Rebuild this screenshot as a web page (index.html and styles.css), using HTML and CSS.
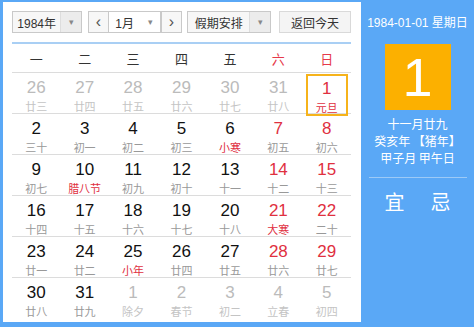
FILE: index.html
```html
<!DOCTYPE html>
<html lang="zh-CN">
<head>
    <meta charset="UTF-8">
    <title>万年历</title>
    <link rel="stylesheet" href="styles.css">
</head>
<body>
    <div class="calendar">
        <div class="main">
            <div class="toolbar">
                <div class="dropdown year">
                    <span class="value">1984年</span>
                    <span class="arrow">&#9662;</span>
                </div>
                <div class="month-group">
                    <span class="step">&lsaquo;</span>
                    <div class="dropdown month">
                        <span class="value">1月</span>
                        <span class="arrow">&#9662;</span>
                    </div>
                    <span class="step next">&rsaquo;</span>
                </div>
                <div class="dropdown holiday">
                    <span class="value">假期安排</span>
                    <span class="arrow">&#9662;</span>
                </div>
                <button class="today">返回今天</button>
            </div>

            <div class="weekdays">
                <span>一</span><span>二</span><span>三</span><span>四</span><span>五</span>
                <span class="red">六</span><span class="red">日</span>
            </div>

            <div class="days">
                <div class="row">
                    <div class="day other"><b>26</b><i>廿三</i></div>
                    <div class="day other"><b>27</b><i>廿四</i></div>
                    <div class="day other"><b>28</b><i>廿五</i></div>
                    <div class="day other"><b>29</b><i>廿六</i></div>
                    <div class="day other"><b>30</b><i>廿七</i></div>
                    <div class="day other"><b>31</b><i>廿八</i></div>
                    <div class="day weekend selected"><b>1</b><i class="fest">元旦</i></div>
                </div>
                <div class="row">
                    <div class="day"><b>2</b><i>三十</i></div>
                    <div class="day"><b>3</b><i>初一</i></div>
                    <div class="day"><b>4</b><i>初二</i></div>
                    <div class="day"><b>5</b><i>初三</i></div>
                    <div class="day"><b>6</b><i class="fest">小寒</i></div>
                    <div class="day weekend"><b>7</b><i>初五</i></div>
                    <div class="day weekend"><b>8</b><i>初六</i></div>
                </div>
                <div class="row">
                    <div class="day"><b>9</b><i>初七</i></div>
                    <div class="day"><b>10</b><i class="fest">腊八节</i></div>
                    <div class="day"><b>11</b><i>初九</i></div>
                    <div class="day"><b>12</b><i>初十</i></div>
                    <div class="day"><b>13</b><i>十一</i></div>
                    <div class="day weekend"><b>14</b><i>十二</i></div>
                    <div class="day weekend"><b>15</b><i>十三</i></div>
                </div>
                <div class="row">
                    <div class="day"><b>16</b><i>十四</i></div>
                    <div class="day"><b>17</b><i>十五</i></div>
                    <div class="day"><b>18</b><i>十六</i></div>
                    <div class="day"><b>19</b><i>十七</i></div>
                    <div class="day"><b>20</b><i>十八</i></div>
                    <div class="day weekend"><b>21</b><i class="fest">大寒</i></div>
                    <div class="day weekend"><b>22</b><i>二十</i></div>
                </div>
                <div class="row">
                    <div class="day"><b>23</b><i>廿一</i></div>
                    <div class="day"><b>24</b><i>廿二</i></div>
                    <div class="day"><b>25</b><i class="fest">小年</i></div>
                    <div class="day"><b>26</b><i>廿四</i></div>
                    <div class="day"><b>27</b><i>廿五</i></div>
                    <div class="day weekend"><b>28</b><i>廿六</i></div>
                    <div class="day weekend"><b>29</b><i>廿七</i></div>
                </div>
                <div class="row">
                    <div class="day"><b>30</b><i>廿八</i></div>
                    <div class="day"><b>31</b><i>廿九</i></div>
                    <div class="day other"><b>1</b><i>除夕</i></div>
                    <div class="day other"><b>2</b><i>春节</i></div>
                    <div class="day other"><b>3</b><i>初二</i></div>
                    <div class="day other"><b>4</b><i>立春</i></div>
                    <div class="day other"><b>5</b><i>初四</i></div>
                </div>
            </div>
        </div>

        <div class="side">
            <div class="side-date">1984-01-01 星期日</div>
            <div class="big-day">1</div>
            <div class="lunar">
                <p>十一月廿九</p>
                <p>癸亥年 【猪年】</p>
                <p>甲子月 甲午日</p>
            </div>
            <div class="yiji">
                <span>宜</span>
                <span>忌</span>
            </div>
        </div>
    </div>
</body>
</html>
```

FILE: styles.css
```css
body {
    margin: 0;
    background: #5aa8f6;
    font-family: "Liberation Sans", "Noto Sans CJK SC", sans-serif;
}
.calendar {
    display: flex;
    width: 474px;
    height: 327px;
    padding-top: 2px;
    box-sizing: border-box;
}
.main {
    width: 358px;
    height: 320px;
    margin-left: 3px;
    background: #fff;
    padding: 9px 10px 0 9px;
    box-sizing: border-box;
}
.toolbar {
    display: flex;
    align-items: center;
    height: 22px;
    font-size: 12px;
    color: #333;
}
.dropdown {
    display: flex;
    height: 22px;
    border: 1px solid #c9c9c9;
    box-sizing: border-box;
    background: #f7f7f7;
}
.dropdown .value {
    display: flex;
    align-items: center;
    justify-content: center;
}
.dropdown .arrow {
    display: flex;
    align-items: center;
    justify-content: center;
    width: 20px;
    border-left: 1px solid #ddd;
    background: #ececec;
    color: #888;
    font-size: 9px;
}
.year {
    width: 70px;
}
.year .value {
    width: 48px;
}
.month-group {
    display: flex;
    margin-left: 6px;
}
.step {
    display: flex;
    align-items: center;
    justify-content: center;
    width: 21px;
    height: 22px;
    border: 1px solid #c9c9c9;
    box-sizing: border-box;
    background: #f7f7f7;
    font-size: 16px;
    color: #555;
}
.month {
    width: 52px;
    border-left: none;
    background: #fff;
}
.month .value {
    width: 32px;
}
.month .arrow {
    border-left: none;
    background: #fff;
}
.step.next {
    border-left: 1px solid #c9c9c9;
}
.holiday {
    width: 84px;
    margin-left: 5px;
}
.holiday .value {
    width: 63px;
}
.today {
    width: 72px;
    height: 22px;
    margin-left: 8px;
    border: 1px solid #d9d9d9;
    background: #f4f4f4;
    font-family: "Noto Sans CJK SC", sans-serif;
    font-size: 12px;
    color: #333;
    padding: 0;
}
.weekdays {
    display: grid;
    grid-template-columns: repeat(7, 1fr);
    width: 339px;
    height: 28px;
    margin-top: 9px;
    border-top: 2px solid #a9cff4;
    border-bottom: 1px solid #dcdcdc;
    align-items: center;
    text-align: center;
    font-family: "Noto Sans CJK SC", sans-serif;
    font-size: 13px;
    color: #333;
}
.weekdays .red {
    color: #e6394a;
}
.days {
    width: 339px;
}
.row {
    display: grid;
    grid-template-columns: repeat(7, 1fr);
    height: 40px;
    border-bottom: 1px solid #dcdcdc;
}
.row:last-child {
    border-bottom: none;
}
.day {
    display: flex;
    flex-direction: column;
    align-items: center;
    padding-top: 5px;
    box-sizing: border-box;
}
.day b {
    font-weight: normal;
    font-size: 17px;
    line-height: 20px;
    color: #111;
}
.day i {
    font-style: normal;
    font-family: "Noto Sans CJK SC", sans-serif;
    font-size: 11px;
    line-height: 14px;
    margin-top: 1px;
    color: #999;
}
.day.weekend b {
    color: #e0303f;
}
.day i.fest {
    color: #e0303f;
}
.day.other b {
    color: #bbb;
}
.day.other i {
    color: #c4c4c4;
}
.day.selected {
    border: 2px solid #f6b31b;
    margin: 1px 3px 0 3px;
    padding-top: 3px;
}
.side {
    flex: 1;
    display: flex;
    flex-direction: column;
    align-items: center;
    color: #fff;
}
.side-date {
    margin-top: 13px;
    font-family: "Liberation Sans", "Noto Sans CJK SC", sans-serif;
    font-size: 12px;
    line-height: 16px;
}
.big-day {
    width: 66px;
    height: 66px;
    margin-top: 13px;
    background: #fcb000;
    font-size: 54px;
    line-height: 66px;
    text-align: center;
}
.lunar {
    margin-top: 5px;
    font-family: "Noto Sans CJK SC", sans-serif;
    font-size: 12px;
    text-align: center;
}
.lunar p {
    margin: 0;
    line-height: 17px;
}
.yiji {
    display: flex;
    justify-content: space-between;
    width: 98px;
    margin-top: 11px;
    padding: 11px 16px 0;
    border-top: 1px solid #9ccaf7;
    box-sizing: border-box;
    font-family: "Noto Sans CJK SC", sans-serif;
    font-size: 20px;
    line-height: 26px;
}
```
